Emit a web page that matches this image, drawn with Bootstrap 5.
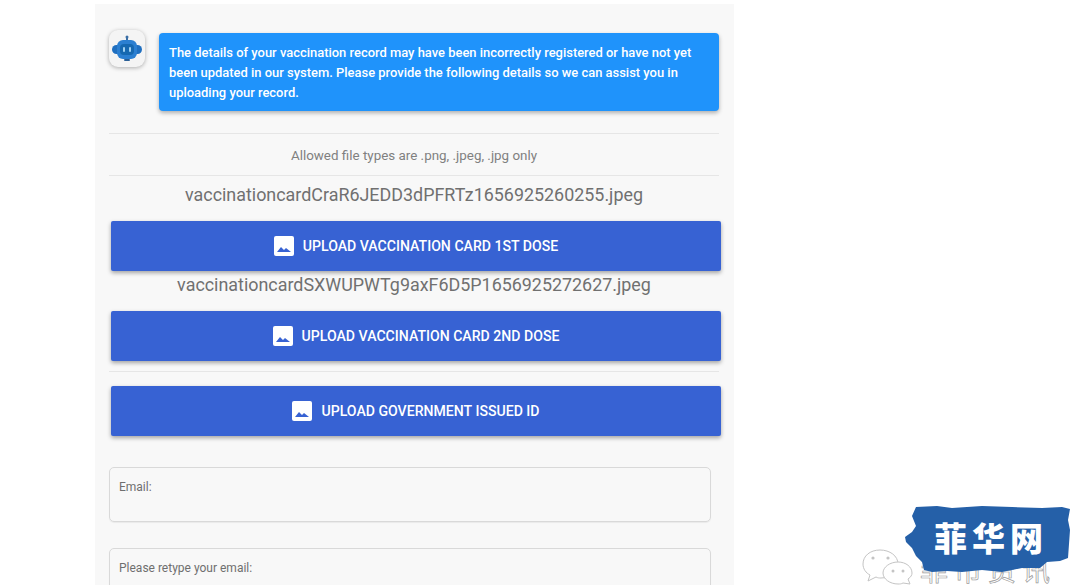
<!DOCTYPE html>
<html lang="en">
<head>
  <meta charset="UTF-8">
  <title>Vaccination record</title>
  <link href="https://cdn.jsdelivr.net/npm/bootstrap@5.3.3/dist/css/bootstrap.min.css" rel="stylesheet">
  <style>
    html, body { height: 585px; overflow: hidden; background: #fff; }
    body { font-family: Roboto, "Liberation Sans", sans-serif; color: #757575; position: relative; }
    .sheet { width: 639px; height: 581px; margin: 4px 0 0 95px; background: #f8f8f8; padding: 26px 13px 0 14px; overflow: hidden; }
    .bot-face { width: 36px; height: 37px; background: #f4f4f4; border-radius: 9px; box-shadow: 0 1px 4px rgba(0,0,0,.3); flex: none; margin-right: 14px; }
    .bubble { width: 560px; height: 78px; margin-top: 3px; background: #1f93fb; color: #fff; border-radius: 4px; padding: 10px 10px 0; font-size: 12.95px; line-height: 20px; font-weight: 500; box-shadow: 0 2px 4px rgba(0,0,0,.3); }
    .rule { height: 1px; background: #e6e6e6; width: 610px; }
    .allowed { height: 41px; font-size: 13.4px; line-height: 43px; color: #808080; text-align: center; width: 610px; }
    .fname { font-size: 17.9px; line-height: 24px; color: #707070; text-align: center; width: 610px; }
    .upload-btn { width: 610px; height: 50px; margin-left: 2px; padding-top: 8px; background: #3762d3; color: #fff; border: 0; border-radius: 2px; font-size: 14.1px; font-weight: 500; box-shadow: 0 2px 4px rgba(0,0,0,.35); }
    .upload-btn:hover { background: #3762d3; color: #fff; }
    .upload-btn svg { width: 20px; height: 20px; margin-right: 9px; margin-top: -2px; }
    .field-box { width: 602px; height: 55px; border: 1px solid #d9d9d9; border-radius: 5px; padding: 12px 9px 0; font-size: 12px; line-height: 14px; color: #6f6f6f; box-shadow: 0 1px 1px rgba(0,0,0,.06); }
    .stamp { position: absolute; left: 862px; top: 500px; width: 218px; height: 85px; }
    .stamp-word { position: absolute; left: 72px; top: 19px; color: #fff; font-family: "Noto Sans CJK SC", sans-serif; font-weight: 900; font-size: 33px; line-height: 36px; letter-spacing: 5px; white-space: nowrap; }
    .stamp-sub { position: absolute; left: 58px; top: 55px; color: #fff; -webkit-text-stroke: .7px #9a9a9a; font-family: "Noto Sans CJK SC", sans-serif; font-size: 28px; line-height: 28px; letter-spacing: 6px; white-space: nowrap; }
  </style>
</head>
<body>

  <div class="sheet">
    <div class="d-flex">
      <div class="bot-face d-flex align-items-center justify-content-center">
        <svg width="32" height="28" viewBox="0 0 32 28">
          <rect x="15" y="1" width="2" height="5" fill="#3a6ea5"/>
          <circle cx="16" cy="2" r="1.5" fill="#3a6ea5"/>
          <rect x="1" y="10" width="30" height="9" rx="4.5" fill="#1f6fc0"/>
          <rect x="6" y="5" width="20" height="19" rx="6" fill="#2b7fd1"/>
          <rect x="9" y="9" width="14" height="11" rx="4" fill="#1668b0"/>
          <rect x="12" y="12" width="2" height="5" rx="1" fill="#9fd0f2"/>
          <rect x="18" y="12" width="2" height="5" rx="1" fill="#9fd0f2"/>
          <rect x="13" y="24" width="6" height="2" rx="1" fill="#2a5f96"/>
        </svg>
      </div>
      <div class="bubble">The details of your vaccination record may have been incorrectly registered or have not yet been updated in our system. Please provide the following details so we can assist you in uploading your record.</div>
    </div>

    <div class="rule" style="margin-top:22px"></div>
    <div class="allowed">Allowed file types are .png, .jpeg, .jpg only</div>
    <div class="rule"></div>

    <div class="fname" style="margin-top:7px">vaccinationcardCraR6JEDD3dPFRTz1656925260255.jpeg</div>
    <button class="btn upload-btn d-flex align-items-center justify-content-center text-uppercase" style="margin-top:14px">
      <svg viewBox="0 0 20 20"><rect width="20" height="20" rx="2" fill="#fff"/><path d="M3 16l4-5 3 3 2-2 5 4z" fill="#3762d3"/></svg>
      Upload vaccination card 1st dose
    </button>

    <div class="fname" style="margin-top:2px">vaccinationcardSXWUPWTg9axF6D5P1656925272627.jpeg</div>
    <button class="btn upload-btn d-flex align-items-center justify-content-center text-uppercase" style="margin-top:14px">
      <svg viewBox="0 0 20 20"><rect width="20" height="20" rx="2" fill="#fff"/><path d="M3 16l4-5 3 3 2-2 5 4z" fill="#3762d3"/></svg>
      Upload vaccination card 2nd dose
    </button>

    <div class="rule" style="margin-top:10px"></div>
    <button class="btn upload-btn d-flex align-items-center justify-content-center text-uppercase" style="margin-top:14px">
      <svg viewBox="0 0 20 20"><rect width="20" height="20" rx="2" fill="#fff"/><path d="M3 16l4-5 3 3 2-2 5 4z" fill="#3762d3"/></svg>
      Upload government issued ID
    </button>

    <div class="field-box" style="margin-top:31px">Email:</div>
    <div class="field-box" style="margin-top:26px">Please retype your email:</div>
  </div>

  <!-- watermark over the corner of the shot -->
  <div class="stamp">
    <svg class="position-absolute top-0 start-0" width="218" height="85" viewBox="0 0 218 85">
      <g fill="#fff" stroke="#c4c4c4" stroke-width="1">
        <path d="M18 50C8 50 1 56 1 64c0 5 3 9 7 11l-2 6 8-4c2 1 3 1 5 1 9 0 17-6 17-14s-8-14-18-14z"/>
        <path d="M36 62c-8 0-15 5-15 11s7 11 15 11c2 0 3 0 5-1l7 1-2-5c3-2 4-4 4-6 0-6-6-11-14-11z"/>
      </g>
      <g fill="#c4c4c4">
        <circle cx="11" cy="58" r="1.6"/><circle cx="26" cy="58" r="1.6"/>
        <circle cx="31" cy="71" r="1.5"/><circle cx="41" cy="71" r="1.5"/>
      </g>
    </svg>
    <div class="stamp-sub">菲市资讯</div>
    <svg class="position-absolute top-0 start-0" width="218" height="85" viewBox="0 0 218 85">
      <path d="M54 7 75 6 90 8 120 6 150 7 180 8 200 7 208 9 206 20 208 30 207 44 206 58 198 61 185 62 178 68 160 68 140 72 120 70 100 72 85 71 70 72 62 70 60 62 54 56 50 48 44 42 43 37 50 32 54 26 50 16z" fill="#2560a8"/>
    </svg>
    <div class="stamp-word">菲华网</div>
  </div>

</body>
</html>
